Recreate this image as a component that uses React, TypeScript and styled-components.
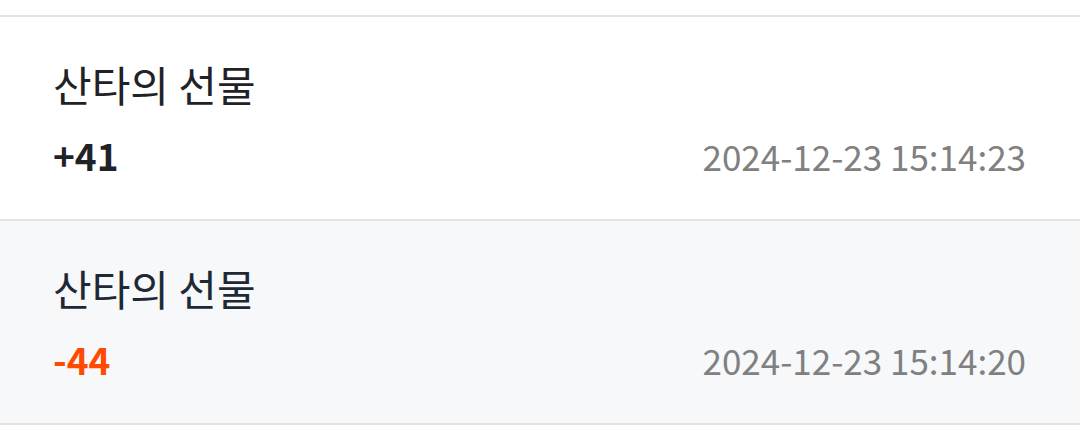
import React from "react";
import styled, { createGlobalStyle } from "styled-components";

const GlobalStyle = createGlobalStyle`
  html, body {
    margin: 0;
    padding: 0;
    background: #ffffff;
  }
  body {
    font-family: "Noto Sans CJK KR", "Noto Sans", sans-serif;
  }
`;

const Page = styled.div`
  padding-top: 15px;
`;

const List = styled.ul`
  list-style: none;
  margin: 0;
  padding: 0;
  border-top: 2px solid #e2e2e2;
`;

const Item = styled.li<{ $shaded?: boolean }>`
  box-sizing: border-box;
  height: 204px;
  padding: 38px 54px 0 53px;
  border-bottom: 2px solid #e2e2e2;
  background-color: ${(p) => (p.$shaded ? "#f7f8fa" : "#ffffff")};
`;

const Title = styled.div<{ $shaded?: boolean }>`
  font-size: 42px;
  line-height: 58px;
  color: ${(p) => (p.$shaded ? "#1e2935" : "#1f2226")};
`;

const Bottom = styled.div`
  display: flex;
  justify-content: space-between;
  align-items: baseline;
  margin-top: 18px;
`;

const Amount = styled.span<{ $negative?: boolean }>`
  font-size: 37px;
  line-height: 48px;
  font-weight: 700;
  color: ${(p) => (p.$negative ? "#ff4a00" : "#1f2226")};
`;

const Time = styled.span`
  font-size: 35px;
  line-height: 48px;
  color: #808080;
`;

type Record = { title: string; amount: number; time: string };

const records: Record[] = [
  { title: "산타의 선물", amount: 41, time: "2024-12-23 15:14:23" },
  { title: "산타의 선물", amount: -44, time: "2024-12-23 15:14:20" },
];

const App: React.FC = () => {
  return (
    <Page>
      <GlobalStyle />
      <List>
        {records.map((r, i) => (
          <Item key={i} $shaded={i % 2 === 1}>
            <Title $shaded={i % 2 === 1}>{r.title}</Title>
            <Bottom>
              <Amount $negative={r.amount < 0}>
                {r.amount > 0 ? `+${r.amount}` : r.amount}
              </Amount>
              <Time>{r.time}</Time>
            </Bottom>
          </Item>
        ))}
      </List>
    </Page>
  );
};

export default App;
